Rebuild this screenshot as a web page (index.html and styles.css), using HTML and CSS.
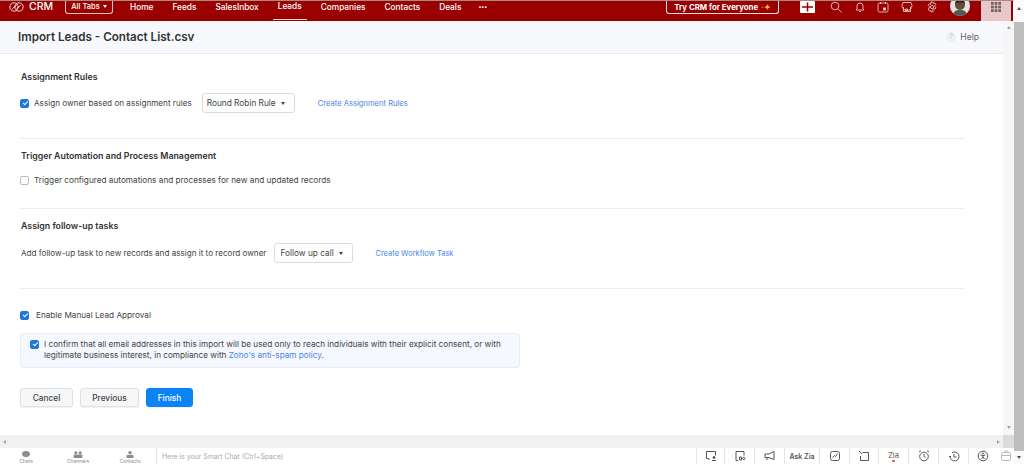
FILE: index.html
```html
<!DOCTYPE html>
<html lang="en">
<head>
<meta charset="utf-8">
<title>Import Leads</title>
<link rel="stylesheet" href="styles.css">
</head>
<body>
<div class="app">
  <div class="main">
    <header class="topbar">
      <div class="brand">
        <svg class="brand-logo" viewBox="0 0 18 12" width="15" height="10"><g fill="none" stroke="#fff" stroke-width="1"><ellipse cx="6" cy="6" rx="5" ry="5"/><ellipse cx="12" cy="6" rx="5" ry="5"/><path d="M4 8l5-4M9 8l5-4"/></g></svg>
        <span>CRM</span>
      </div>
      <div class="alltabs">All Tabs <i class="caret-w"></i></div>
      <nav class="nav">
        <a class="nav-item">Home</a>
        <a class="nav-item">Feeds</a>
        <a class="nav-item">SalesInbox</a>
        <a class="nav-item active">Leads</a>
        <a class="nav-item">Companies</a>
        <a class="nav-item">Contacts</a>
        <a class="nav-item">Deals</a>
        <a class="nav-item more">•••</a>
      </nav>
      <div class="try">Try CRM for Everyone <span class="spark">·✦</span></div>
      <div class="plus"><svg viewBox="0 0 15 12" width="15" height="12"><path d="M7.500 1.500v9M2 6h11" stroke="#9b0000" stroke-width="1.500"/></svg></div>
      <svg class="ticon t-search" viewBox="0 0 12 12" width="12" height="12"><circle cx="5" cy="5" r="3.800"/><path d="M8 8l3.500 3.500"/></svg>
      <svg class="ticon t-bell" viewBox="0 0 12 12" width="12" height="12"><path d="M3 8V5a3 3 0 0 1 6 0v3l1 1H2zM5 10.500h2"/></svg>
      <svg class="ticon t-cal" viewBox="0 0 12 12" width="12" height="12"><rect x="1" y="2" width="10" height="9" rx="1.500"/><path d="M3.500 1v2M8.500 1v2"/><rect x="6.500" y="7" width="2" height="2" fill="#fff"/></svg>
      <svg class="ticon t-store" viewBox="0 0 12 12" width="12" height="12"><path d="M2 1.500h8l1 3a1.500 1.500 0 0 1-10 0zM2.500 6v4.500h7V6M4.500 10V8h2v2"/></svg>
      <svg class="ticon t-gear" viewBox="0 0 12 12" width="12" height="12"><path d="M5 1h2l.4 1.400 1.400-.5 1 1.700-1 1.100.1.800 1.100 1-1 1.700-1.500-.4-.6.5L7 10.800H5l-.4-1.500-1.400.5-1-1.700 1-1.100V5.500l-1-1 1-1.700 1.400.5z"/><circle cx="6" cy="6" r="1.600"/></svg>
      <div class="avatar"><svg viewBox="0 0 20 20" width="20" height="20"><rect width="20" height="20" fill="#dfe6e2"/><path d="M3 20c0-5 3-6 7-6s7 1 7 6z" fill="#4d5a55"/><circle cx="10" cy="9" r="5" fill="#6b4a38"/><path d="M5 8c0-6 10-6 10 0l-2-1.500H7z" fill="#22201f"/></svg></div>
      <div class="grid-btn"><svg viewBox="0 0 11 11" width="10" height="10" fill="#6d6264"><rect width="3" height="3"/><rect x="4" width="3" height="3"/><rect x="8" width="3" height="3"/><rect y="4" width="3" height="3"/><rect x="4" y="4" width="3" height="3"/><rect x="8" y="4" width="3" height="3"/><rect y="8" width="3" height="3"/><rect x="4" y="8" width="3" height="3"/><rect x="8" y="8" width="3" height="3"/></svg></div>
    </header>

    <div class="work">
      <div class="pane">
        <div class="page-head">
          <h1 class="page-title">Import Leads - Contact List.csv</h1>
          <div class="help"><span class="help-icon">?</span>Help</div>
        </div>
        <div class="form">
          <section class="sec sec-assign">
            <h2 class="sec-title">Assignment Rules</h2>
            <div class="row">
              <span class="cb on"></span>
              <span class="lbl">Assign owner based on assignment rules</span>
              <div class="select sel-rule">Round Robin Rule <i class="caret"></i></div>
              <a class="link link-rule">Create Assignment Rules</a>
            </div>
          </section>
          <section class="sec sec-trigger">
            <h2 class="sec-title">Trigger Automation and Process Management</h2>
            <div class="row row-trigger">
              <span class="cb"></span>
              <span class="lbl">Trigger configured automations and processes for new and updated records</span>
            </div>
          </section>
          <section class="sec sec-follow">
            <h2 class="sec-title">Assign follow-up tasks</h2>
            <div class="row">
              <span class="lbl lbl-follow">Add follow-up task to new records and assign it to record owner</span>
              <div class="select sel-follow">Follow up call <i class="caret"></i></div>
              <a class="link link-follow">Create Workflow Task</a>
            </div>
          </section>
          <div class="row row-approval">
            <span class="cb on"></span>
            <span class="lbl">Enable Manual Lead Approval</span>
          </div>
          <div class="consent">
            <span class="cb on"></span>
            <p class="consent-text">I confirm that all email addresses in this import will be used only to reach individuals with their explicit consent, or with legitimate business interest, in compliance with <a class="policy">Zoho's anti-spam policy</a>.</p>
          </div>
          <div class="actions">
            <button class="btn">Cancel</button>
            <button class="btn btn-prev">Previous</button>
            <button class="btn btn-primary">Finish</button>
          </div>
        </div>
      </div>
      <div class="inner-sb"><i class="arr-up small"></i><i class="arr-down small"></i></div>
    </div>

    <div class="hscroll"><i class="arr-left"></i><i class="arr-right"></i><span class="hs-corner"></span></div>

    <footer class="bottom">
      <div class="tab"><svg viewBox="0 0 12 8" width="12" height="8"><ellipse cx="6" cy="3.500" rx="4.500" ry="3.500" fill="#8c8c8c"/></svg><span>Chats</span></div>
      <div class="tab"><svg viewBox="0 0 12 8" width="12" height="8" fill="#8c8c8c"><circle cx="3.500" cy="2" r="1.800"/><circle cx="8.500" cy="2" r="1.800"/><rect x="1" y="4" width="10" height="4" rx="1"/></svg><span>Channels</span></div>
      <div class="tab"><svg viewBox="0 0 12 8" width="12" height="8" fill="#8c8c8c"><circle cx="6" cy="2" r="2"/><rect x="2" y="4.500" width="8" height="3.500" rx="1"/></svg><span>Contacts</span></div>
      <div class="smart">Here is your Smart Chat (Ctrl+Space)</div>
      <div class="tools">
        <div class="tool w28"><svg viewBox="0 0 12 12" width="12" height="12"><path d="M4 8.500H1.500v-7h9v4M3 8.500l1.500 1.500"/><circle cx="9" cy="7.500" r="1" fill="#555"/><path d="M7 10.500h4"/></svg></div>
        <div class="tool"><svg viewBox="0 0 12 12" width="12" height="12"><path d="M4 10.500H2v-9h8v4M5.500 7h2v3h-2z"/><circle cx="9.800" cy="8.500" r="1.200"/></svg></div>
        <div class="tool"><svg viewBox="0 0 12 12" width="12" height="12"><path d="M1 4h4l5-2.500v8L5 7.500H1zM3 7.500v2.500"/></svg></div>
        <div class="tool tool-zia">Ask Zia</div>
        <div class="tool"><svg viewBox="0 0 12 12" width="12" height="12"><rect x="1.500" y="1.500" width="9" height="9" rx="2"/><path d="M3.500 7.500l2-2 1 1 2-3"/></svg></div>
        <div class="tool w29"><svg viewBox="0 0 12 12" width="12" height="12"><path d="M4.500 2.500H10.500v8H2.500V6M1 1l3 3"/></svg></div>
        <div class="tool"><span class="zia-mark">Zia</span></div>
        <div class="tool"><svg viewBox="0 0 12 12" width="12" height="12"><circle cx="6" cy="6.500" r="4.300"/><path d="M6 4v2.500l1.500 1M1 2l2-1.200M11 2L9 .8"/></svg></div>
        <div class="tool"><svg viewBox="0 0 12 12" width="12" height="12"><path d="M2 6.500a4.500 4.500 0 1 0 2-3.800M6 4v3h2.500M1 6.500h2"/></svg></div>
        <div class="tool w29"><svg viewBox="0 0 12 12" width="12" height="12"><circle cx="6" cy="6" r="4.800"/><circle cx="6" cy="3.500" r=".6"/><path d="M3.500 5L6 5.500 8.500 5M6 5.500v1.500L4.500 9M6 7l1.500 2"/></svg></div>
        <div class="tool tool-last"><svg class="faded" viewBox="0 0 12 12" width="12" height="12"><rect x="1.500" y="2.500" width="9" height="8" rx="1.500"/><path d="M1.500 5.500h9M4 1h4"/></svg></div>
      </div>
    </footer>
  </div>
  <div class="outer-sb"><i class="arr-up"></i><span class="outer-thumb"></span><i class="arr-down"></i></div>
</div>
</body>
</html>
```
FILE: styles.css
```css
* { box-sizing: border-box; }
html, body { margin: 0; height: 100%; overflow: hidden; background: #fff; }
body { font-family: Inter, "Liberation Sans", sans-serif; color: #333; }
.app { display: flex; width: 1024px; height: 464px; }
.main { width: 1014px; display: flex; flex-direction: column; }

.topbar { height: 21px; flex: none; background: #9b0000; border-top: 1px solid #a98a82; border-right: 1px solid #fff; display: flex; align-items: flex-start; color: #fff; overflow: hidden; }
.brand { width: 65px; flex: none; display: flex; align-items: center; gap: 5px; padding-left: 9px; font-size: 10.500px; font-weight: 500; height: 11px; }
.alltabs { width: 48px; flex: none; height: 14px; margin-top: -1px; border: 1px solid #e5c4c4; border-top: 0; border-radius: 0 0 3px 3px; display: flex; align-items: center; justify-content: center; gap: 3px; font-size: 7.500px; font-weight: 500; white-space: nowrap; }
.caret-w { width: 0; height: 0; border: 2.500px solid transparent; border-top: 3px solid #fff; border-bottom: 0; }
.nav { display: flex; height: 19px; margin-left: 17px; gap: 19px; width: 358px; flex: none; }
.nav-item { font-size: 8.300px; font-weight: 500; height: 19px; padding-bottom: 8px; display: flex; align-items: center; white-space: nowrap; }
.nav-item.active { border-bottom: 1px solid #f0d8d8; padding: 0 5px 8px; margin: 0 -5px; }
.nav-item.more { font-size: 5.500px; margin-left: -2px; }
.try { margin-left: 178px; width: 113px; flex: none; height: 14px; margin-top: -1px; border: 1px solid #edd; border-top: 0; border-radius: 0 0 3px 3px; display: flex; align-items: center; justify-content: center; font-size: 7.850px; font-weight: 700; gap: 3px; white-space: nowrap; }
.spark { color: #f5b63a; font-size: 8px; }
.plus { width: 15px; height: 12px; margin-left: 21px; background: #fff; border-radius: 1px; display: flex; flex: none; }
.ticon { flex: none; fill: none; stroke: #e8c4c4; stroke-width: .9; }
.t-search { margin-left: 15px; }
.t-bell { margin-left: 12px; }
.t-cal { margin-left: 11px; }
.t-store { margin-left: 12px; }
.t-gear { margin-left: 13px; }
.avatar { width: 20px; height: 20px; border-radius: 50%; overflow: hidden; margin-left: 12px; margin-top: -5px; flex: none; }
.grid-btn { width: 30px; height: 20px; margin-left: 11px; background: #e8c8c8; display: flex; justify-content: center; padding-top: 1px; flex: none; }

.work { flex: 1; display: flex; min-height: 0; }
.pane { width: 1003px; display: flex; flex-direction: column; }
.page-head { height: 33px; flex: none; background: #f7f9fd; border-bottom: 1px solid #e9ecf2; display: flex; align-items: center; padding: 0 24px 1px 18px; justify-content: space-between; }
.page-title { margin: 0; font-size: 11.650px; font-weight: 600; color: #333; }
.help { display: flex; align-items: center; gap: 4px; font-size: 8.600px; color: #666; }
.help-icon { width: 10px; height: 10px; border-radius: 50%; background: #eef0f3; color: #c8c8c8; font-size: 7px; display: flex; align-items: center; justify-content: center; }

.form { padding: 0 0 0 20px; flex: 1; }
.sec { width: 945px; border-bottom: 1px solid #eeeeee; }
.sec-title { margin: 0 0 0 1px; font-size: 8.800px; font-weight: 600; color: #333; line-height: 11px; }
.sec-assign { padding-top: 17px; height: 85px; }
.sec-trigger { padding-top: 11px; height: 70px; }
.sec-follow { padding-top: 11px; height: 80px; }
.row { display: flex; align-items: center; font-size: 8.200px; color: #444; }
.sec-assign .row { margin-top: 11px; height: 20px; font-size: 8.150px; }
.sec-trigger .row { margin-top: 13px; height: 12px; font-size: 8.220px; }
.sec-follow .row { margin-top: 12px; height: 20px; }
.lbl { white-space: nowrap; line-height: 12px; }
.lbl-follow { margin-left: 1px; font-size: 8.100px; }
.cb { width: 9px; height: 9px; border-radius: 2px; border: 1px solid #bbb; background: #fff; margin-right: 5px; flex: none; display: block; }
.cb.on { background: #1f78d8; border-color: #1f78d8; }
.cb.on::after { content: ""; display: block; width: 4px; height: 2px; border-left: 1px solid #fff; border-bottom: 1px solid #fff; transform: rotate(-45deg); margin: 1px 0 0 1.500px; }
.select { height: 20px; border: 1px solid #dcdcdc; border-radius: 3px; display: flex; align-items: center; gap: 5px; padding: 0 4px; font-size: 8.300px; white-space: nowrap; color: #444; flex: none; }
.sel-rule { width: 93px; margin-left: 10px; }
.sel-follow { width: 79px; margin-left: 8px; padding: 0 5px; }
.caret { width: 0; height: 0; border: 2.500px solid transparent; border-top: 3px solid #444; border-bottom: 0; }
.link { font-size: 7.600px; color: #4a86e8; white-space: nowrap; }
.link-rule { margin-left: 23px; }
.link-follow { margin-left: 22px; font-size: 7.500px; }
.row-approval { margin-top: 20px; height: 12px; }
.row-approval .cb { margin-right: 7px; }
.consent { margin-top: 12px; width: 500px; height: 35px; background: #f5f8fe; border: 1px solid #e8edf6; border-radius: 3px; padding: 5px 8px 0 9px; display: flex; }
.consent .cb { margin: 1px 5px 0 0; }
.consent-text { margin: 0; font-size: 8.200px; line-height: 11px; color: #444; }
.policy { color: #4a86e8; }
.actions { margin-top: 20px; display: flex; gap: 7px; }
.btn { height: 19px; width: 53px; border: 1px solid #dfe1e5; border-radius: 3px; background: #f5f6f8; font: 500 8.300px Inter, sans-serif; color: #444; padding: 0; box-shadow: 0 1px 1px rgba(0,0,0,.06); }
.btn-prev { width: 59px; }
.btn-primary { width: 47px; background: #0a84f5; border-color: #0a84f5; color: #fff; }

.inner-sb { width: 11px; background: #f6f6f6; display: flex; flex-direction: column; justify-content: space-between; align-items: center; padding: 5px 0 6px; }
.outer-sb { width: 10px; background: #fafafa; display: flex; flex-direction: column; align-items: center; }
.outer-sb .arr-up { margin: 7px 0 12px; }
.outer-thumb { width: 10px; flex: 1; background: #bdbdbd; }
.outer-sb .arr-down { margin: 5px 0; }
.arr-up, .arr-down, .arr-left, .arr-right { display: block; width: 0; height: 0; border: 2.500px solid transparent; }
.arr-up { border-bottom: 3px solid #505050; border-top: 0; }
.arr-down { border-top: 3px solid #505050; border-bottom: 0; }
.arr-up.small { border-bottom-color: #a3a3a3; }
.arr-down.small { border-top-color: #a3a3a3; }
.arr-left { border-right: 3px solid #a3a3a3; border-left: 0; }
.arr-right { border-left: 3px solid #a3a3a3; border-right: 0; }

.hscroll { height: 13px; flex: none; background: #f1f1f1; display: flex; align-items: center; padding-left: 3px; }
.hscroll .arr-right { margin-left: auto; margin-right: 3px; }
.hs-corner { width: 11px; height: 13px; background: #dcdcdc; }

.bottom { height: 16px; flex: none; display: flex; align-items: center; background: #fff; overflow: hidden; }
.tab { width: 52px; height: 16px; display: flex; flex-direction: column; align-items: center; font-size: 5px; color: #8c8c8c; line-height: 6px; padding-top: 3px; flex: none; }
.smart { margin-left: 0; padding-left: 5px; border-left: 1px solid #e4e4e4; height: 16px; display: flex; align-items: center; font-size: 6.900px; color: #aaa; white-space: nowrap; width: 540px; flex: none; }
.tools { display: flex; height: 16px; margin-left: auto; }
.tool { width: 30px; height: 16px; border-left: 1px solid #e4e4e4; display: flex; align-items: center; justify-content: center; flex: none; }
.tool svg { fill: none; stroke: #555; stroke-width: 1; }
.w28 { width: 28px; }
.w29 { width: 29px; }
.tool-zia { width: 35px; font-size: 7px; font-weight: 600; color: #555; white-space: nowrap; }
.zia-mark { font-size: 7.500px; color: #555; line-height: 9px; }
.zia-mark::after { content: ""; display: block; width: 3px; height: 2px; margin: 0 auto; background: #d33; border-radius: 50%; }
.tool-last { border-left: 0; width: 17px; }
.tool .faded { stroke: #bbb; }
```
